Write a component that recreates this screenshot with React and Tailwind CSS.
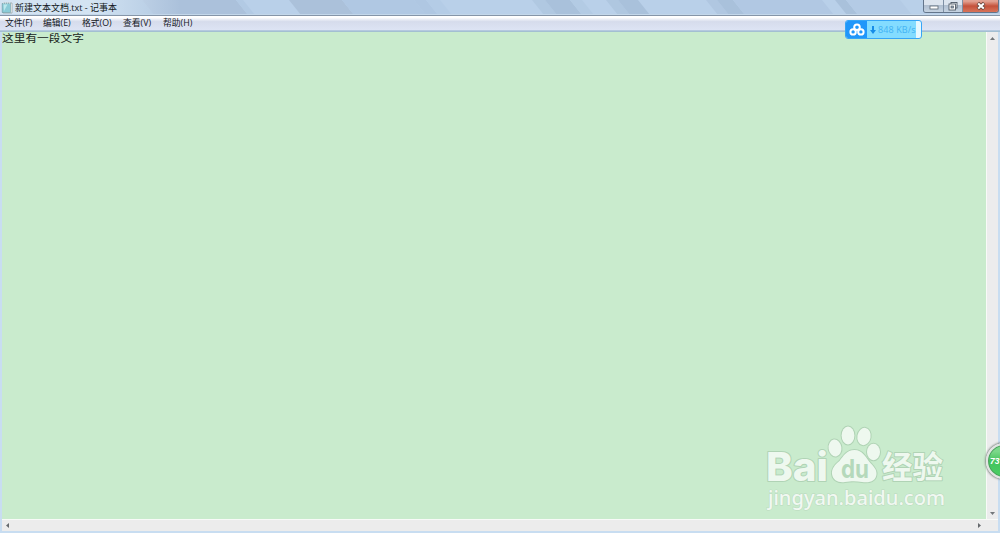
import React from 'react';

const menuItems = [
  { label: '文件(F)', width: 'w-[38px]' },
  { label: '编辑(E)', width: 'w-[39px]' },
  { label: '格式(O)', width: 'w-[41px]' },
  { label: '查看(V)', width: 'w-[40px]' },
  { label: '帮助(H)', width: 'w-[40px]' }
];

// Aero glass streaks: [left, right, color]
const streaks = [
  [95, 142, '#aec6e0'],
  [142, 236, '#abc1db'],
  [236, 243, '#b2cae4'],
  [289, 342, '#abc1da'],
  [342, 414, '#b0c8e3'],
  [414, 426, '#afc7e2'],
  [426, 440, '#b4cce6'],
  [532, 545, '#b0c8e1'],
  [545, 570, '#a9c1db'],
  [570, 582, '#b3cbe4'],
  [606, 618, '#afc7e0'],
  [618, 638, '#a9c1db'],
  [706, 717, '#b0c7e1'],
  [717, 733, '#a9c1db'],
  [733, 822, '#b1c8e3'],
  [835, 846, '#a9c1db'],
  [846, 900, '#b4cbe5']
];

function GlassStreaks() {
  return (
    <svg className="absolute inset-0" width="1000" height="15" viewBox="0 0 1000 15">
      {streaks.map(([left, right, color]) => (
        <polygon
          key={left}
          points={`${left},0 ${right},0 ${right + 12},15 ${left + 12},15`}
          fill={color}
        />
      ))}
    </svg>
  );
}

function NotepadIcon() {
  return (
    <svg className="w-3 h-3 shrink-0" viewBox="0 0 12 12">
      <path d="M2 1h9v10H2z" fill="#fff" stroke="#91999b" strokeWidth="0.7" />
      <path d="M1.2 1.5h8.3v9H1.2z" fill="#8acbd7" stroke="#6d9ba5" strokeWidth="0.6" />
      <path d="M2.5 2.5h4L3 9z" fill="#bce8ed" />
      <path d="M2 1h8" stroke="#e8f4f5" strokeDasharray="1 1" />
    </svg>
  );
}

function WindowControls() {
  return (
    <div className="flex h-[13px] w-[76px] overflow-hidden rounded-b-[3px] border border-t-0 border-[#63758b]">
      <div className="flex w-[20px] items-center justify-center border-r border-[#7e8fa4] bg-linear-to-b from-[#dce4ee] from-40% via-[#b1bfd0] via-45% to-[#c5d3e2]">
        <svg className="w-2.5 h-[13px]" viewBox="0 0 10 13">
          <rect x="1" y="6" width="8" height="3" fill="#fff" stroke="#5b6673" strokeWidth="0.8" />
        </svg>
      </div>
      <div className="flex w-[19px] items-center justify-center border-r border-[#7e8fa4] bg-linear-to-b from-[#dce4ee] from-40% via-[#b1bfd0] via-45% to-[#c5d3e2]">
        <svg className="w-2.5 h-[13px]" viewBox="0 0 10 13">
          <rect x="3" y="2.5" width="6" height="5.5" fill="#eef2f6" stroke="#4f5a67" strokeWidth="0.9" />
          <rect x="1" y="4" width="6.5" height="6" fill="#fff" stroke="#4f5a67" strokeWidth="0.9" />
          <rect x="3" y="6" width="2.4" height="2" fill="#9aa8b8" stroke="#4f5a67" strokeWidth="0.7" />
        </svg>
      </div>
      <div className="flex flex-1 items-center justify-center bg-linear-to-b from-[#e2a293] from-10% via-[#c4513b] via-50% to-[#d9745a]">
        <svg className="w-2.5 h-[13px]" viewBox="0 0 10 13">
          <path d="M1.8 3.2 8.2 8.8M8.2 3.2 1.8 8.8" stroke="#66473f" strokeWidth="3.6" />
          <path d="M2.2 3.5 7.8 8.5M7.8 3.5 2.2 8.5" stroke="#fff" strokeWidth="2" />
        </svg>
      </div>
    </div>
  );
}

function TitleBar() {
  return (
    <div className="relative h-[16px] border-b border-[#8595a8] bg-[#b9d0e9]">
      <GlassStreaks />
      <div className="absolute inset-y-0 left-0 w-[180px] bg-linear-to-r from-[#d3e3f2] from-50% to-transparent" />
      <div className="absolute inset-x-0 bottom-0 h-px bg-[#c3d7ea]" />
      <div className="relative flex h-[15px] justify-between pl-px pr-px">
        <div className="flex items-center">
          <NotepadIcon />
          <span className="ml-[2px] whitespace-nowrap text-[9px] leading-[14px] text-[#111820]">
            新建文本文档.txt - 记事本
          </span>
        </div>
        <WindowControls />
      </div>
    </div>
  );
}

function MenuBar() {
  return (
    <div className="flex h-[14px] items-center bg-linear-to-b from-white from-10% via-[#d6dcec] via-40% to-[#dde4f4] pl-[5px]">
      {menuItems.map((item) => (
        <span
          key={item.label}
          className={`${item.width} whitespace-nowrap text-[8.8px] leading-[14px] text-[#14171c]`}
        >
          {item.label}
        </span>
      ))}
    </div>
  );
}

function SpeedWidget() {
  return (
    <div className="absolute left-[845px] top-[20px] flex h-[19px] w-[77px] overflow-hidden rounded-[3px] border border-[#35a5f6] bg-[#e6f8ff]">
      <div className="flex w-[21px] items-center justify-center bg-[#2097fa]">
        <svg className="h-[14px] w-4" viewBox="0 0 16 14" fill="none" stroke="#fff" strokeWidth="2">
          <circle cx="8" cy="4.3" r="2.8" />
          <circle cx="4.1" cy="8.9" r="2.7" />
          <circle cx="11.9" cy="8.9" r="2.7" />
        </svg>
      </div>
      <div className="flex w-[49px] items-center bg-[#83dcff] pl-[3px]">
        <svg className="h-2 w-[6px] shrink-0" viewBox="0 0 6 8">
          <path d="M2 0h2v4h2L3 8 0 4h2z" fill="#168ce8" />
        </svg>
        <span className="ml-[2px] whitespace-nowrap font-['Noto_Sans',sans-serif] text-[9px] leading-4 tracking-[0.1px] text-[#45b5f4]">
          848 KB/s
        </span>
      </div>
    </div>
  );
}

function Watermark() {
  return (
    <svg className="absolute left-[750px] top-[415px]" width="220" height="105" viewBox="0 0 220 105">
      <g
        fill="#eef8ef"
        stroke="#b0d3b5"
        strokeWidth="2"
        strokeLinejoin="round"
        paintOrder="stroke"
      >
        <text x="16" y="66" fontFamily="Inter, sans-serif" fontWeight="800" fontSize="39.5" textLength="62" lengthAdjust="spacingAndGlyphs">
          Bai
        </text>
        <ellipse cx="85" cy="33" rx="6.4" ry="8.5" transform="rotate(-8 85 33)" />
        <ellipse cx="98" cy="20.5" rx="6.4" ry="9" />
        <ellipse cx="114" cy="21.5" rx="6.6" ry="8.7" transform="rotate(10 114 21.5)" />
        <ellipse cx="123.5" cy="37" rx="6.5" ry="8.2" />
        <path d="M104.5 35c-8 0-11 6-15 11-5 4-8 8-7.500 13 1 6.500 6.500 9 13 8 6.500-1 11-1 17 0 8 1.200 14-1 14.500-8 .3-5-3.500-8-7-12-4-5-7-12-15-12z" />
        <text x="132" y="63" fontFamily="Noto Sans CJK SC, sans-serif" fontWeight="700" fontSize="31" textLength="61" lengthAdjust="spacingAndGlyphs">
          经验
        </text>
      </g>
      <text x="91" y="62.500" fill="#b5d9bb" fontFamily="Inter, sans-serif" fontWeight="700" fontSize="25" textLength="28" lengthAdjust="spacingAndGlyphs">
        du
      </text>
      <text x="18" y="90" fill="#f1f8f2" stroke="#b9d9bd" strokeWidth="1" paintOrder="stroke" fontFamily="Noto Sans, sans-serif" fontWeight="500" fontSize="20.5" textLength="177" lengthAdjust="spacingAndGlyphs">
        jingyan.baidu.com
      </text>
    </svg>
  );
}

function VerticalScrollbar() {
  return (
    <div className="flex w-3 flex-col items-center justify-between border-l border-[#f8faf8] bg-[#ececed] pb-[4px] pt-[5px]">
      <svg className="h-[3px] w-[5px]" viewBox="0 0 5 3">
        <path d="M0 3 2.5 0 5 3z" fill="#73777b" />
      </svg>
      <svg className="h-[3px] w-[5px]" viewBox="0 0 5 3">
        <path d="M0 0h5L2.5 3z" fill="#73777b" />
      </svg>
    </div>
  );
}

function HorizontalScrollbar() {
  return (
    <div className="flex h-3 items-center justify-between border-t border-[#f8faf8] bg-[#ececec] pl-[4px] pr-[17px]">
      <svg className="h-[5px] w-[3px]" viewBox="0 0 3 5">
        <path d="M3 0v5L0 2.5z" fill="#65696d" />
      </svg>
      <svg className="h-[5px] w-[3px]" viewBox="0 0 3 5">
        <path d="M0 0v5l3-2.5z" fill="#65696d" />
      </svg>
    </div>
  );
}

function App() {
  return (
    <div
      lang="zh-CN"
      className="relative flex h-[533px] w-[1000px] flex-col overflow-hidden bg-[#c8ddf1] font-['Open_Sans','Noto_Sans_CJK_SC',sans-serif]"
    >
      <TitleBar />
      <MenuBar />
      <div className="h-[2px] border-t border-[#b5c9df] bg-[#a3bfd2]" />

      {/* Editor */}
      <div className="flex min-h-0 flex-1 flex-col pb-[2px] pl-[2px] pr-[2px]">
        <div className="flex min-h-0 flex-1">
          <div className="flex-1 bg-[#c9ebcd]">
            <p className="w-fit origin-left scale-x-[1.17] whitespace-nowrap font-['Noto_Sans_CJK_SC',sans-serif] text-[10px] leading-[12px] text-[#17221a]">
              这里有一段文字
            </p>
          </div>
          <VerticalScrollbar />
        </div>
        <HorizontalScrollbar />
      </div>

      <Watermark />
      <SpeedWidget />

      {/* Floating memory ball */}
      <div className="absolute left-[986px] top-[443px] flex h-9 w-9 items-center rounded-full border-2 border-[#e1e3e2] bg-linear-to-b from-[#7bd88a] from-20% via-[#42c35d] via-50% to-[#4bcf65] pl-[2px] shadow-[0_0_2px_1px_#8b918d,inset_0_0_0_1px_#4c9e5e]">
        <span className="font-['Liberation_Sans',sans-serif] text-[8.5px] font-bold italic leading-none text-white">
          73
        </span>
      </div>
    </div>
  );
}

export default App;
